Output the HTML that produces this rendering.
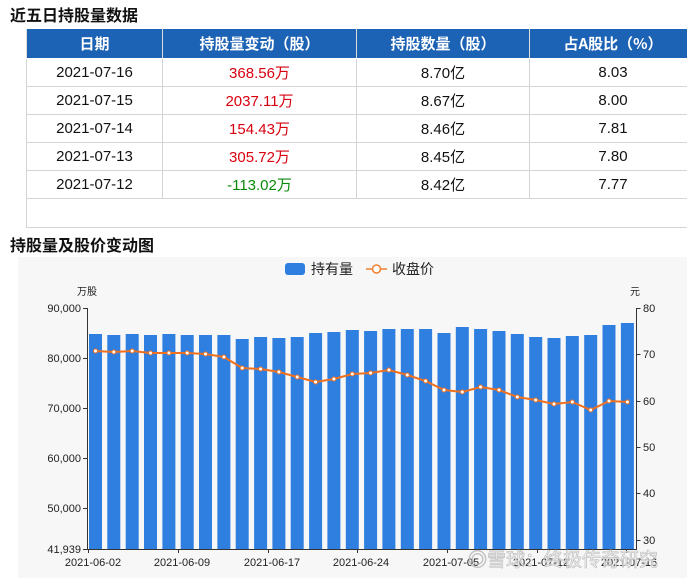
<!DOCTYPE html>
<html><head><meta charset="utf-8">
<style>
body{margin:0;width:687px;height:578px;overflow:hidden;background:#fff;font-family:"Liberation Sans","Noto Sans CJK SC",sans-serif;position:relative}
.h{position:absolute;left:10px;font-size:16px;font-weight:bold;color:#111;font-family:"Noto Sans CJK SC",sans-serif}
table{position:absolute;left:26px;top:28px;border-collapse:collapse;table-layout:fixed;width:670px}
td,th{border:1px solid #d4d4d4;text-align:center;font-size:15px;height:27px;padding:0;color:#111}
th{background:#1d63b5;color:#fff;font-weight:bold;height:29px;border-color:#fff #ddd;font-family:"Noto Sans CJK SC",sans-serif;font-size:15px}
.r{color:#d9000f}.g{color:#0a8a0a}
</style></head><body>
<div class="h" style="top:2px">近五日持股量数据</div>
<table>
<colgroup><col style="width:136px"><col style="width:194px"><col style="width:173px"><col style="width:167px"></colgroup>
<tr><th>日期</th><th>持股量变动（股）</th><th>持股数量（股）</th><th>占A股比（%）</th></tr>
<tr><td>2021-07-16</td><td class="r">368.56万</td><td>8.70亿</td><td>8.03</td></tr>
<tr><td>2021-07-15</td><td class="r">2037.11万</td><td>8.67亿</td><td>8.00</td></tr>
<tr><td>2021-07-14</td><td class="r">154.43万</td><td>8.46亿</td><td>7.81</td></tr>
<tr><td>2021-07-13</td><td class="r">305.72万</td><td>8.45亿</td><td>7.80</td></tr>
<tr><td>2021-07-12</td><td class="g">-113.02万</td><td>8.42亿</td><td>7.77</td></tr>
<tr><td colspan="4" style="height:28px"></td></tr>
</table>
<div class="h" style="top:232px">持股量及股价变动图</div>
<svg style="position:absolute;left:0;top:0" width="687" height="578" font-family="Liberation Sans,Noto Sans CJK SC,sans-serif">
<rect x="18" y="257" width="669" height="321" fill="#f7f7f7"/>
<rect x="285" y="263" width="20" height="12" rx="3" fill="#2f7fe0"/>
<text x="311" y="274" font-size="14" fill="#222">持有量</text>
<line x1="366" y1="269" x2="387" y2="269" stroke="#f08030" stroke-width="1.5"/>
<circle cx="376.5" cy="269" r="4" fill="#fff" stroke="#f08030" stroke-width="1.5"/>
<text x="392" y="274" font-size="14" fill="#222">收盘价</text>
<text x="77" y="295" font-size="10" fill="#222">万股</text>
<text x="630" y="295" font-size="10" fill="#222">元</text>
<g fill="#2f7fe0">
<rect x="89" y="334" width="13" height="215"/><rect x="107.3" y="335" width="13" height="214"/><rect x="125.7" y="334" width="13" height="215"/><rect x="144" y="335" width="13" height="214"/><rect x="162.4" y="334" width="13" height="215"/><rect x="180.7" y="335" width="13" height="214"/><rect x="199" y="335" width="13" height="214"/><rect x="217.4" y="335" width="13" height="214"/><rect x="235.7" y="339" width="13" height="210"/><rect x="254.1" y="337" width="13" height="212"/><rect x="272.4" y="338" width="13" height="211"/><rect x="290.7" y="337" width="13" height="212"/><rect x="309.1" y="333" width="13" height="216"/><rect x="327.4" y="332" width="13" height="217"/><rect x="345.8" y="330" width="13" height="219"/><rect x="364.1" y="331" width="13" height="218"/><rect x="382.4" y="329" width="13" height="220"/><rect x="400.8" y="329" width="13" height="220"/><rect x="419.1" y="329" width="13" height="220"/><rect x="437.5" y="333" width="13" height="216"/><rect x="455.8" y="327" width="13" height="222"/><rect x="474.1" y="329" width="13" height="220"/><rect x="492.5" y="331" width="13" height="218"/><rect x="510.8" y="334" width="13" height="215"/><rect x="529.2" y="337" width="13" height="212"/><rect x="547.5" y="338" width="13" height="211"/><rect x="565.8" y="336" width="13" height="213"/><rect x="584.2" y="335" width="13" height="214"/><rect x="602.5" y="325" width="13" height="224"/><rect x="620.9" y="323" width="13" height="226"/>
</g>
<polyline fill="none" stroke="#f07020" stroke-width="2" points="95.5,351 113.8,352 132.2,351 150.5,353 168.9,353 187.2,353 205.5,354 223.9,357 242.2,368 260.6,369 278.9,372 297.2,377 315.6,382 333.9,379 352.3,374 370.6,373 388.9,370 407.3,375 425.6,381 444,390 462.3,392 480.6,387 499,390 517.3,397 535.7,400 554,404 572.3,402 590.7,410 609,401 627.4,402"/>
<g fill="#fff" stroke="#f07020" stroke-width="1">
<circle cx="95.5" cy="351" r="2"/><circle cx="113.8" cy="352" r="2"/><circle cx="132.2" cy="351" r="2"/><circle cx="150.5" cy="353" r="2"/><circle cx="168.9" cy="353" r="2"/><circle cx="187.2" cy="353" r="2"/><circle cx="205.5" cy="354" r="2"/><circle cx="223.9" cy="357" r="2"/><circle cx="242.2" cy="368" r="2"/><circle cx="260.6" cy="369" r="2"/><circle cx="278.9" cy="372" r="2"/><circle cx="297.2" cy="377" r="2"/><circle cx="315.6" cy="382" r="2"/><circle cx="333.9" cy="379" r="2"/><circle cx="352.3" cy="374" r="2"/><circle cx="370.6" cy="373" r="2"/><circle cx="388.9" cy="370" r="2"/><circle cx="407.3" cy="375" r="2"/><circle cx="425.6" cy="381" r="2"/><circle cx="444" cy="390" r="2"/><circle cx="462.3" cy="392" r="2"/><circle cx="480.6" cy="387" r="2"/><circle cx="499" cy="390" r="2"/><circle cx="517.3" cy="397" r="2"/><circle cx="535.7" cy="400" r="2"/><circle cx="554" cy="404" r="2"/><circle cx="572.3" cy="402" r="2"/><circle cx="590.7" cy="410" r="2"/><circle cx="609" cy="401" r="2"/><circle cx="627.4" cy="402" r="2"/>
</g>
<g stroke="#333" stroke-width="1" fill="none">
<path d="M87.5 308V549.5H637M83 308.5h4.5M83 358.5h4.5M83 408.5h4.5M83 458.5h4.5M83 508.5h4.5M83 549.5h4.5"/>
<path d="M636.5 308V549M636.5 308.5h4M636.5 354.5h4M636.5 401.5h4M636.5 447.5h4M636.5 493.5h4M636.5 540.5h4"/>
<path d="M88.5 549v4M178.5 549v4M268.5 549v4M357.5 549v4M447.5 549v4M537.5 549v4M626.5 549v4"/>
</g>
<g font-size="11" fill="#222" text-anchor="end">
<text x="81" y="312">90,000</text><text x="81" y="362">80,000</text><text x="81" y="412">70,000</text><text x="81" y="462">60,000</text><text x="81" y="512">50,000</text><text x="81" y="553">41,939</text>
</g>
<g font-size="11" fill="#222">
<text x="643" y="312">80</text><text x="643" y="358">70</text><text x="643" y="405">60</text><text x="643" y="451">50</text><text x="643" y="497">40</text><text x="643" y="544">30</text>
</g>
<g font-size="11" fill="#222" text-anchor="middle">
<text x="93" y="566">2021-06-02</text><text x="182" y="566">2021-06-09</text><text x="272" y="566">2021-06-17</text><text x="361" y="566">2021-06-24</text><text x="451" y="566">2021-07-05</text><text x="541" y="566">2021-07-12</text><text x="629" y="566">2021-07-16</text>
</g>
<text x="468" y="566" font-size="19" fill="#fff" stroke="#bbb" stroke-width="0.8" opacity="0.85">◎雪球：终极传奇研究</text>
</svg>
</body></html>
